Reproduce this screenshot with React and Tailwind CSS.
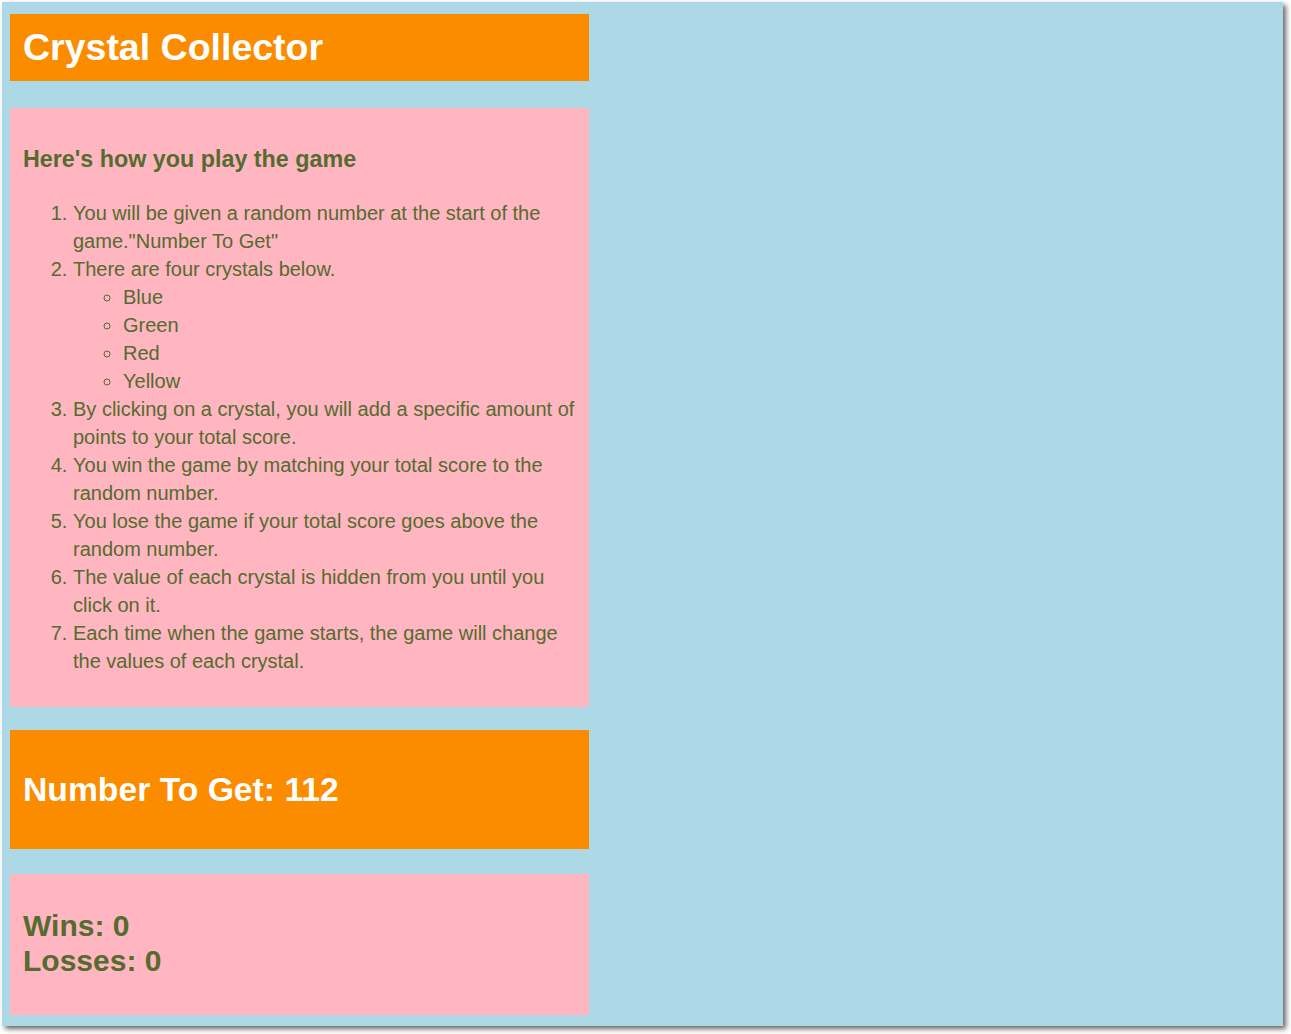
import React from 'react';

const steps = [
    'You will be given a random number at the start of the game."Number To Get"',
    'There are four crystals below.',
    'By clicking on a crystal, you will add a specific amount of points to your total score.',
    'You win the game by matching your total score to the random number.',
    'You lose the game if your total score goes above the random number.',
    'The value of each crystal is hidden from you until you click on it.',
    'Each time when the game starts, the game will change the values of each crystal.',
];

const crystals = ['Blue', 'Green', 'Red', 'Yellow'];

const App = () => {
    return (
        <div className="min-h-screen bg-white font-['Liberation_Sans',Arial,sans-serif]">
            <div className="ml-[2px] mt-[2px] w-[1281px] h-[1024px] bg-[#ADD8E6] shadow-[3px_3px_5px_rgba(0,0,0,0.6)] pl-[8px] pt-[12px]">
                <div className="w-[579px] flex flex-col">
                    {/* Title */}
                    <div className="h-[67px] bg-[#FB8C00] px-[13px] flex items-center">
                        <h1 className="text-[37.5px] font-bold text-white leading-none">Crystal Collector</h1>
                    </div>

                    {/* Instructions */}
                    <div className="mt-[27px] bg-[#FFB6C1] px-[13px] pt-[37px] pb-[32px] text-[#556B2F]">
                        <h3 className="text-[23.3px] font-bold leading-[28px] mb-[26px]">Here's how you play the game</h3>
                        <ol className="list-decimal pl-[50px] text-[20px] leading-[28px]">
                            {steps.map((step, i) => (
                                <li key={i}>
                                    {step}
                                    {i === 1 && (
                                        <ul className="list-[circle] pl-[50px]">
                                            {crystals.map(c => (
                                                <li key={c}>{c}</li>
                                            ))}
                                        </ul>
                                    )}
                                </li>
                            ))}
                        </ol>
                    </div>

                    {/* Target number */}
                    <div className="mt-[23px] h-[119px] bg-[#FB8C00] px-[13px] flex items-center">
                        <h2 className="text-[33.7px] font-bold text-white leading-none">Number To Get: 112</h2>
                    </div>

                    {/* Score */}
                    <div className="mt-[25px] h-[141px] bg-[#FFB6C1] px-[13px] pt-[34px] text-[#556B2F]">
                        <h2 className="text-[30px] font-bold leading-[35px]">Wins: 0</h2>
                        <h2 className="text-[30px] font-bold leading-[35px]">Losses: 0</h2>
                    </div>
                </div>
            </div>
        </div>
    );
};

export default App;
